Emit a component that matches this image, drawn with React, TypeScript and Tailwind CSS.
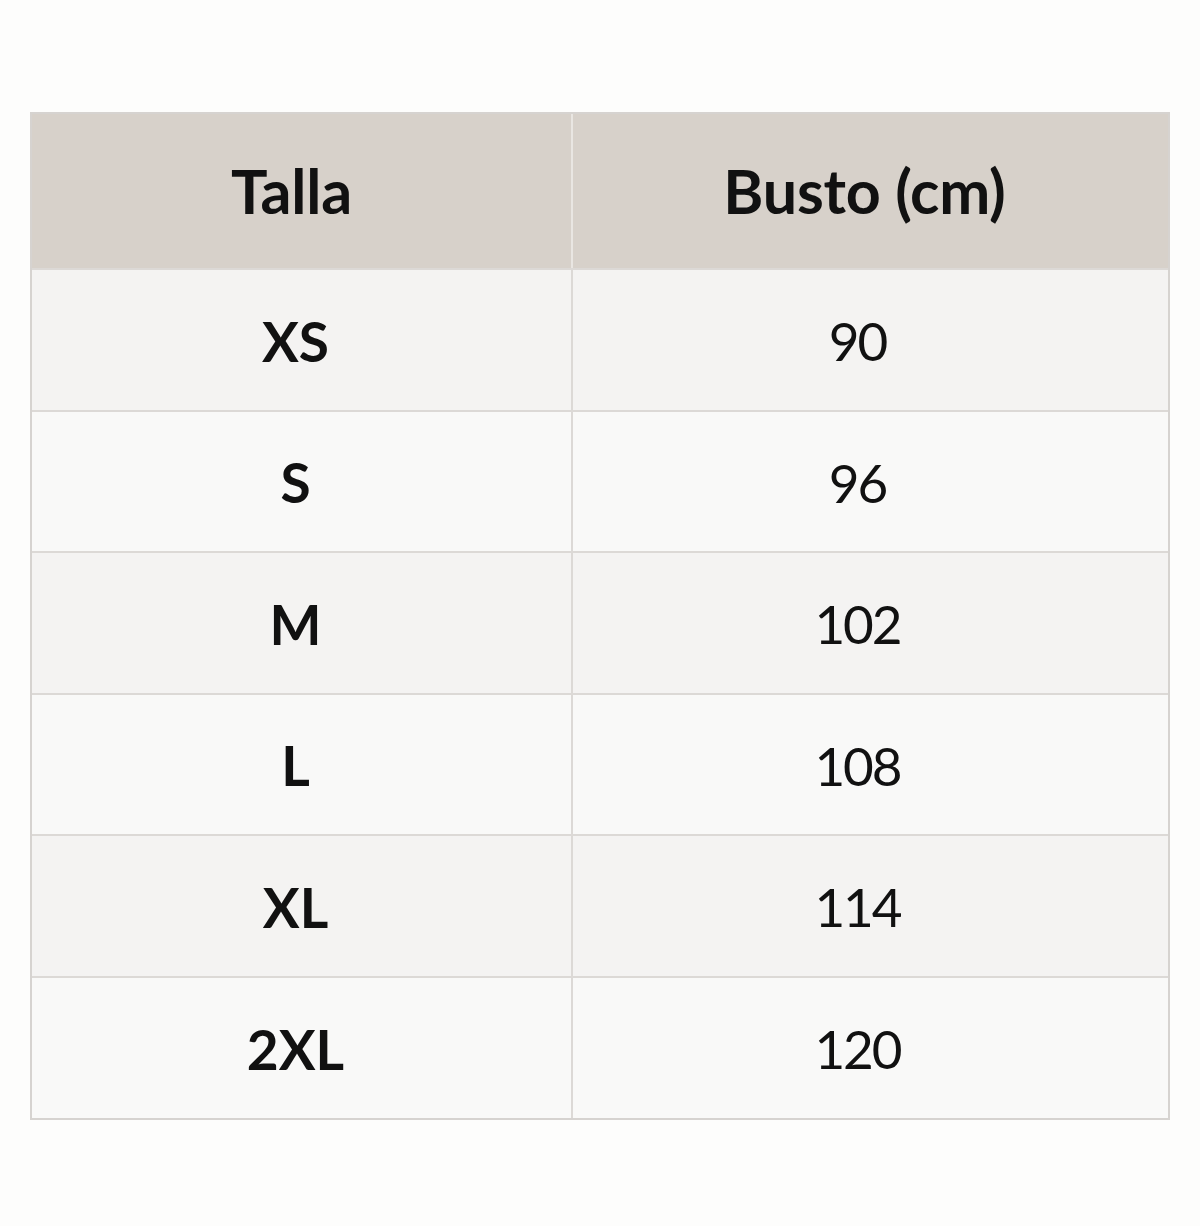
import React from 'react'

const rows = [
  { size: 'XS', bust: '90' },
  { size: 'S', bust: '96' },
  { size: 'M', bust: '102' },
  { size: 'L', bust: '108' },
  { size: 'XL', bust: '114' },
  { size: '2XL', bust: '120' },
]

export default function App() {
  return (
    <div className="min-h-[1226px] w-[1200px] bg-[#fdfdfc] pt-[112px] font-['Lato',sans-serif] text-[#111111]">
      <div className="mx-[30px] w-[1140px] border-2 border-[#d6d3d0]">
        <div className="grid h-[154px] grid-cols-[541px_1fr] bg-[#d7d1ca]">
          <div className="flex items-center justify-center border-r-2 border-[#e9e6e2] pr-[20px] text-[61px] font-bold tracking-[-0.2px]">
            Talla
          </div>
          <div className="flex items-center justify-center pr-[12px] text-[61px] font-bold tracking-[-0.2px]">
            Busto (cm)
          </div>
        </div>
        {rows.map((row, i) => (
          <div
            key={row.size}
            className={`grid h-[141.6px] grid-cols-[541px_1fr] border-t-2 border-[#dcd9d6] ${i % 2 === 0 ? 'bg-[#f4f3f2]' : 'bg-[#f9f9f8]'}`}
          >
            <div className="flex items-center justify-center border-r-2 border-[#dcd9d6] pr-[12px] pt-[2px] text-[55px] font-bold">
              {row.size}
            </div>
            <div className="flex items-center justify-center pr-[26px] pt-[2px] text-[53px] font-normal tracking-[-2px]">
              {row.bust}
            </div>
          </div>
        ))}
      </div>
    </div>
  )
}
